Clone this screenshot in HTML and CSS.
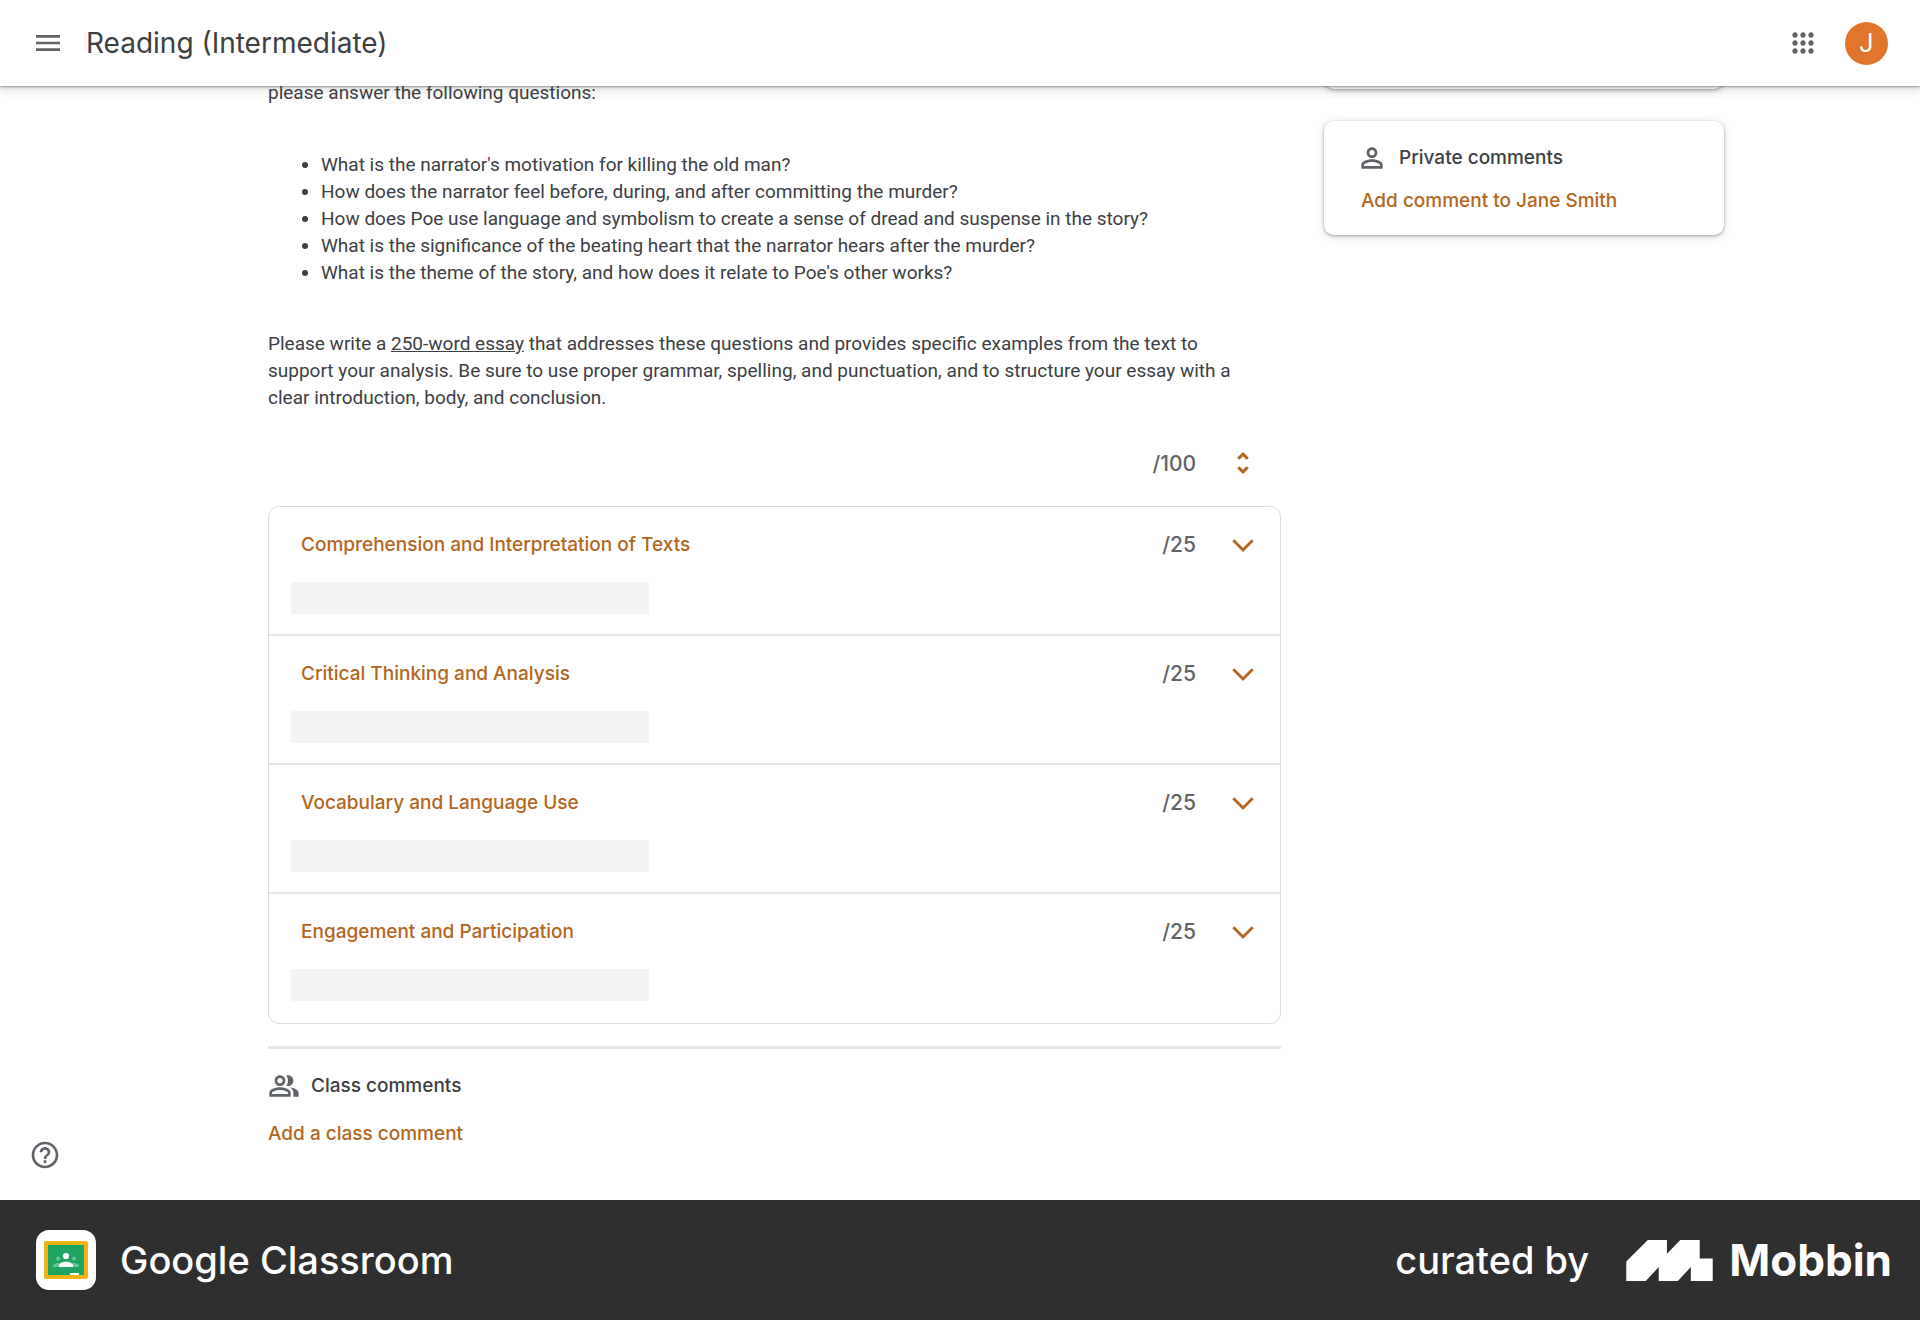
FILE: index.html
```html
<!DOCTYPE html>
<html lang="en">
<head>
  <meta charset="UTF-8">
  <meta name="viewport" content="width=device-width, initial-scale=1">
  <title>Reading (Intermediate)</title>
  <link rel="stylesheet" href="styles.css">
</head>
<body>
  <header class="topbar">
    <button class="icon-btn" aria-label="Main menu">
      <svg viewBox="0 0 24 24" width="32" height="32"><path d="M3 18h18v-2H3v2zm0-5h18v-2H3v2zm0-7v2h18V6H3z"/></svg>
    </button>
    <h1>Reading (Intermediate)</h1>
    <button class="icon-btn apps" aria-label="Google apps">
      <svg viewBox="0 0 24 24" width="32" height="32"><path d="M6 8c1.1 0 2-.9 2-2s-.9-2-2-2-2 .9-2 2 .9 2 2 2zm6 12c1.1 0 2-.9 2-2s-.9-2-2-2-2 .9-2 2 .9 2 2 2zm-6 0c1.1 0 2-.9 2-2s-.9-2-2-2-2 .9-2 2 .9 2 2 2zm0-6c1.1 0 2-.9 2-2s-.9-2-2-2-2 .9-2 2 .9 2 2 2zm6 0c1.1 0 2-.9 2-2s-.9-2-2-2-2 .9-2 2 .9 2 2 2zm4-8c0 1.1.9 2 2 2s2-.9 2-2-.9-2-2-2-2 .9-2 2zm-4 2c1.1 0 2-.9 2-2s-.9-2-2-2-2 .9-2 2 .9 2 2 2zm6 6c1.1 0 2-.9 2-2s-.9-2-2-2-2 .9-2 2 .9 2 2 2zm0 6c1.1 0 2-.9 2-2s-.9-2-2-2-2 .9-2 2 .9 2 2 2z"/></svg>
    </button>
    <button class="avatar" aria-label="Account">J</button>
  </header>

  <main class="page">
    <section class="assignment">
      <div class="description">
        <p>please answer the following questions:</p>
        <ul>
          <li>What is the narrator's motivation for killing the old man?</li>
          <li>How does the narrator feel before, during, and after committing the murder?</li>
          <li>How does Poe use language and symbolism to create a sense of dread and suspense in the story?</li>
          <li>What is the significance of the beating heart that the narrator hears after the murder?</li>
          <li>What is the theme of the story, and how does it relate to Poe's other works?</li>
        </ul>
        <p>Please write a <u>250-word essay</u> that addresses these questions and provides specific examples from the text to support your analysis. Be sure to use proper grammar, spelling, and punctuation, and to structure your essay with a clear introduction, body, and conclusion.</p>
      </div>

      <div class="total">
        <span class="points">/100</span>
        <button class="toggle" aria-label="Expand all criteria">
          <svg viewBox="0 0 24 24" width="28" height="28"><path d="M12 6.200L15.100 9.300l1.900-1.900L12 2.500 7 7.400l1.900 1.900L12 6.200zm0 11.600L8.900 14.700 7 16.600l5 4.900 5-4.900-1.900-1.900L12 17.800z"/></svg>
        </button>
      </div>

      <div class="rubric">
        <article class="criterion">
          <div class="criterion-head">
            <h2>Comprehension and Interpretation of Texts</h2>
            <span class="points">/25</span>
            <button class="toggle" aria-label="Expand criterion">
              <svg viewBox="0 0 24 24" width="24" height="24"><path d="M3.300 6.200L12 14.900l8.700-8.700 2 2L12 18.900 1.300 8.200z"/></svg>
            </button>
          </div>
          <div class="levels"></div>
        </article>
        <article class="criterion">
          <div class="criterion-head">
            <h2>Critical Thinking and Analysis</h2>
            <span class="points">/25</span>
            <button class="toggle" aria-label="Expand criterion">
              <svg viewBox="0 0 24 24" width="24" height="24"><path d="M3.300 6.200L12 14.900l8.700-8.700 2 2L12 18.900 1.300 8.200z"/></svg>
            </button>
          </div>
          <div class="levels"></div>
        </article>
        <article class="criterion">
          <div class="criterion-head">
            <h2>Vocabulary and Language Use</h2>
            <span class="points">/25</span>
            <button class="toggle" aria-label="Expand criterion">
              <svg viewBox="0 0 24 24" width="24" height="24"><path d="M3.300 6.200L12 14.900l8.700-8.700 2 2L12 18.900 1.300 8.200z"/></svg>
            </button>
          </div>
          <div class="levels"></div>
        </article>
        <article class="criterion">
          <div class="criterion-head">
            <h2>Engagement and Participation</h2>
            <span class="points">/25</span>
            <button class="toggle" aria-label="Expand criterion">
              <svg viewBox="0 0 24 24" width="24" height="24"><path d="M3.300 6.200L12 14.900l8.700-8.700 2 2L12 18.900 1.300 8.200z"/></svg>
            </button>
          </div>
          <div class="levels"></div>
        </article>
      </div>

      <div class="class-comments">
        <h3>
          <svg viewBox="0 0 24 24" width="32" height="32"><path d="M16.67 13.13C18.04 14.06 19 15.32 19 17v3h4v-3c0-2.18-3.57-3.47-6.33-3.87zM15 12c2.21 0 4-1.79 4-4s-1.79-4-4-4c-.47 0-.91.1-1.33.24C14.5 5.27 15 6.58 15 8s-.5 2.73-1.33 3.76c.42.14.86.24 1.33.24zM9 12c2.21 0 4-1.79 4-4s-1.79-4-4-4-4 1.79-4 4 1.79 4 4 4zm0-6c1.1 0 2 .9 2 2s-.9 2-2 2-2-.9-2-2 .9-2 2-2zm0 7c-2.67 0-8 1.34-8 4v3h16v-3c0-2.66-5.33-4-8-4zm6 5H3v-.99C3.2 16.29 6.3 15 9 15s5.8 1.29 6 2v1z"/></svg>
          Class comments
        </h3>
        <button class="text-btn">Add a class comment</button>
      </div>
    </section>

    <aside class="side">
      <div class="card work"></div>
      <div class="card private">
        <h3>
          <svg viewBox="0 0 24 24" width="32" height="32"><path d="M12 6c1.1 0 2 .9 2 2s-.9 2-2 2-2-.9-2-2 .9-2 2-2m0 9c2.7 0 5.8 1.29 6 2v1H6v-.99c.2-.72 3.3-2.01 6-2.01m0-11C9.79 4 8 5.79 8 8s1.79 4 4 4 4-1.79 4-4-1.79-4-4-4zm0 9c-2.67 0-8 1.34-8 4v3h16v-3c0-2.66-5.33-4-8-4z"/></svg>
          Private comments
        </h3>
        <button class="text-btn">Add comment to Jane Smith</button>
      </div>
    </aside>

    <button class="icon-btn help" aria-label="Help">
      <svg viewBox="0 0 24 24" width="32" height="32"><path d="M11 18h2v-2h-2v2zm1-16C6.48 2 2 6.48 2 12s4.48 10 10 10 10-4.48 10-10S17.52 2 12 2zm0 18c-4.41 0-8-3.59-8-8s3.59-8 8-8 8 3.59 8 8-3.59 8-8 8zm0-14c-2.21 0-4 1.79-4 4h2c0-1.1.9-2 2-2s2 .9 2 2c0 2-3 1.75-3 5h2c0-2.25 3-2.5 3-5 0-2.21-1.79-4-4-4z"/></svg>
    </button>
  </main>

  <footer class="credit">
    <svg viewBox="0 0 60 60" width="60" height="60">
      <rect width="60" height="60" rx="13" fill="#fff"/>
      <rect x="8" y="11" width="44" height="38" rx="2" fill="#f0b514"/>
      <rect x="12" y="15" width="36" height="30" fill="#1fa463"/>
      <g fill="#6cc496">
        <circle cx="22" cy="28.5" r="2"/>
        <circle cx="38" cy="28.5" r="2"/>
        <path d="M17 37v-1.200c0-1.600 2.600-2.800 5-2.800s5 1.200 5 2.800V37z"/>
        <path d="M33 37v-1.200c0-1.600 2.600-2.800 5-2.800s5 1.200 5 2.800V37z"/>
      </g>
      <circle cx="30" cy="26" r="3.100" fill="#fff"/>
      <path d="M23 37v-1.500c0-2.200 3.600-3.800 7-3.800s7 1.600 7 3.800V37z" fill="#fff"/>
      <rect x="34" y="43" width="9" height="2" fill="#fff"/>
    </svg>
    <span class="app-name">Google Classroom</span>
    <span class="curated">curated by</span>
    <svg viewBox="0 0 253 120" width="87" height="41"><path d="M0 63L63 0h56v40l39-40h57v54h38v66h-64V79l-38 41H95V79l-38 41H0z" fill="#fff"/></svg>
    <span class="brand">Mobbin</span>
  </footer>
</body>
</html>
```
FILE: styles.css
```css
* {
  box-sizing: border-box;
}

body {
  margin: 0;
  min-height: 100vh;
  display: flex;
  flex-direction: column;
  font-family: Inter, sans-serif;
  color: #3c4043;
  background: #fff;
}

h1, h2, h3, p, ul {
  margin: 0;
}

button {
  padding: 0;
  border: none;
  background: none;
  font: inherit;
  cursor: pointer;
}

svg {
  display: block;
  flex: none;
  fill: currentColor;
}

/* top bar */
.topbar {
  position: relative;
  z-index: 2;
  display: flex;
  align-items: center;
  height: 86px;
  padding: 0 32px;
  background: #fff;
  box-shadow: 0 1px 2px rgba(60, 64, 67, 0.5), 0 3px 8px 2px rgba(60, 64, 67, 0.15);
}

.topbar h1 {
  margin-left: 22px;
  font-size: 28px;
  font-weight: 400;
}

.icon-btn {
  color: #5f6368;
}

.apps {
  margin-left: auto;
}

.avatar {
  width: 43px;
  height: 43px;
  margin-left: 26px;
  border-radius: 50%;
  background: #e0752b;
  color: #fff;
  font-family: Roboto, sans-serif;
  font-size: 25px;
}

/* page */
.page {
  position: relative;
  flex: 1;
  display: grid;
  grid-template-columns: minmax(0, 1fr) 400px;
  gap: 43px;
  padding: 0 196px 47px 268px;
  overflow: hidden;
}

.assignment {
  margin-top: -7px;
}

.description {
  padding-right: 32px;
  font-family: Roboto, sans-serif;
  font-size: 19px;
  line-height: 27px;
}

.description ul {
  margin: 45px 0 44px;
  padding-left: 53px;
}

.total {
  display: flex;
  align-items: center;
  justify-content: flex-end;
  height: 86px;
  margin-top: 9px;
  padding-right: 14px;
}

.points {
  color: #5f6368;
  font-size: 21px;
  font-weight: 500;
}

.toggle {
  display: grid;
  place-items: center;
  width: 48px;
  height: 48px;
  margin-left: 23px;
  color: #b36620;
}

.rubric {
  border: 1px solid #dadce0;
  border-radius: 11px;
}

.criterion {
  padding-bottom: 20px;
  border-bottom: 2px solid #e4e5e7;
}

.criterion:last-child {
  padding-bottom: 22px;
  border-bottom: none;
}

.criterion-head {
  display: flex;
  align-items: center;
  height: 75px;
  padding: 0 13px 0 32px;
}

.criterion h2 {
  flex: 1;
  color: #b36620;
  font-size: 19px;
  font-weight: 500;
}

.levels {
  width: 358px;
  height: 32px;
  margin-left: 22px;
  border-radius: 2px;
  background: #f1f3f4;
}

.class-comments {
  margin-top: 22px;
  border-top: 3px solid #e4e5e7;
  padding-top: 21px;
}

h3 {
  display: flex;
  align-items: center;
  gap: 11px;
  font-size: 19px;
  font-weight: 500;
  line-height: 32px;
}

h3 svg {
  color: #5f6368;
}

.text-btn {
  display: block;
  margin-top: 16px;
  color: #b36620;
  font-size: 19px;
  font-weight: 500;
  line-height: 32px;
}

/* side column */
.card {
  border-radius: 10px;
  background: #fff;
  box-shadow: 0 1px 3px rgba(60, 64, 67, 0.4), 0 2px 8px 1px rgba(60, 64, 67, 0.15);
}

.work {
  height: 24px;
  margin-top: -21px;
}

.private {
  margin-top: 32px;
  padding: 21px 32px 18px;
}

.private .text-btn {
  margin: 11px 0 0 5px;
}

.help {
  position: absolute;
  left: 29px;
  bottom: 29px;
}

/* credit bar */
.credit {
  display: flex;
  align-items: center;
  height: 120px;
  padding: 0 28px 0 36px;
  background: #2f2f2f;
  color: #fff;
}

.app-name {
  margin: 0 auto 0 24px;
  font-size: 38px;
  font-weight: 500;
}

.curated {
  margin-right: 37px;
  font-size: 38px;
  font-weight: 500;
}

.brand {
  margin-left: 16px;
  font-size: 44px;
  font-weight: 700;
}
```
